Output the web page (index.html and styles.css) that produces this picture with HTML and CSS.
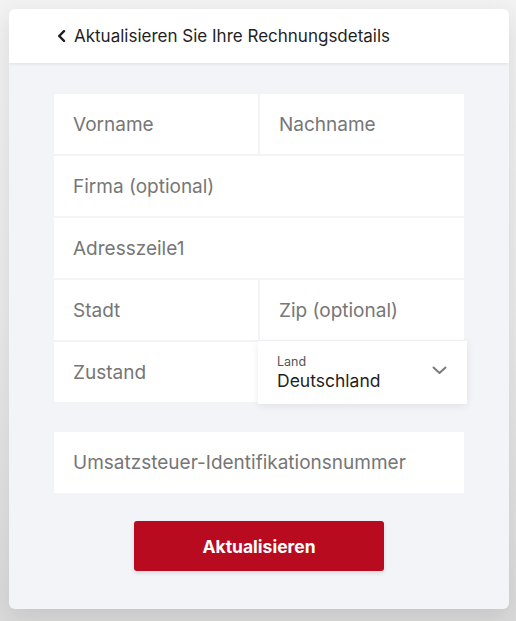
FILE: index.html
```html
<!DOCTYPE html>
<html lang="de">
<head>
<meta charset="utf-8">
<title>Rechnungsdetails</title>
<link rel="stylesheet" href="styles.css">
</head>
<body>
<div class="page">
  <div class="card">
    <div class="card-header">
      <svg class="back" width="9" height="12" viewBox="0 0 9 12"><polyline points="7,1.2 2.2,6 7,10.8" fill="none" stroke="#1f1f1f" stroke-width="2.4" stroke-linecap="round" stroke-linejoin="round"/></svg>
      <span class="title">Aktualisieren Sie Ihre Rechnungsdetails</span>
    </div>
    <div class="card-body">
      <div class="fields">
        <div class="field half">Vorname</div>
        <div class="field half">Nachname</div>
        <div class="field full">Firma (optional)</div>
        <div class="field full">Adresszeile1</div>
        <div class="field half">Stadt</div>
        <div class="field half">Zip (optional)</div>
        <div class="field half">Zustand</div>
        <div class="field select">
          <div class="select-text">
            <span class="select-label">Land</span>
            <span class="select-value">Deutschland</span>
          </div>
          <svg class="chev" width="15" height="9" viewBox="0 0 15 9"><polyline points="1.5,1.5 7.5,7 13.5,1.5" fill="none" stroke="#7a7a7a" stroke-width="2" stroke-linecap="round" stroke-linejoin="round"/></svg>
        </div>
      </div>
      <div class="field vat">Umsatzsteuer-Identifikationsnummer</div>
      <div class="actions">
        <button class="btn">Aktualisieren</button>
      </div>
    </div>
  </div>
</div>
</body>
</html>
```

FILE: styles.css
```css
* { box-sizing: border-box; }
html, body { margin: 0; padding: 0; }
body {
  width: 516px;
  height: 621px;
  overflow: hidden;
  font-family: Inter, "Noto Sans", "Liberation Sans", sans-serif;
  background: linear-gradient(180deg, #f2f2f3 0%, #ebebeb 50%, #dadada 100%);
}
.page {
  padding: 9px 7px 0 9px;
}
.card {
  width: 500px;
  height: 600px;
  border-radius: 6px;
  background: #f3f4f8;
  overflow: hidden;
  box-shadow: 0 8px 24px rgba(0,0,0,0.10);
  display: flex;
  flex-direction: column;
}
.card-header {
  height: 54px;
  background: #fff;
  display: flex;
  align-items: center;
  padding-left: 48px;
  box-shadow: 0 1px 3px rgba(0,0,0,0.08);
  position: relative;
  z-index: 1;
}
.back { margin-right: 8px; margin-top: -1px; }
.title {
  font-size: 17px;
  color: #1f1f1f;
}
.card-body {
  padding: 31px 45px 0 45px;
  display: flex;
  flex-direction: column;
}
.fields {
  display: grid;
  grid-template-columns: 1fr 1fr;
  gap: 2px;
}
.field {
  height: 60px;
  background: #fff;
  display: flex;
  align-items: center;
  padding-left: 19px;
  font-size: 19px;
  color: #767676;
}
.full { grid-column: 1 / 3; }
.select {
  margin: -1px -3px -2px -2px;
  height: 63px;
  padding: 0 20px 0 19px;
  justify-content: space-between;
  box-shadow: 0 2px 8px rgba(0,0,0,0.08);
  position: relative;
}
.select-text {
  display: flex;
  flex-direction: column;
  padding-top: 1px;
}
.select-label {
  font-size: 12.5px;
  color: #555;
  line-height: 16px;
}
.select-value {
  font-size: 17.5px;
  color: #1f1f1f;
  line-height: 22px;
}
.chev { margin-top: -4px; }
.vat {
  margin-top: 30px;
  height: 61px;
}
.actions {
  display: flex;
  justify-content: center;
  margin-top: 28px;
}
.btn {
  width: 250px;
  height: 50px;
  border: 0;
  border-radius: 3px;
  background: #b80b20;
  color: #fff;
  font-family: inherit;
  font-size: 17.5px;
  font-weight: 700;
  box-shadow: 0 2px 4px rgba(0,0,0,0.12);
}
```
